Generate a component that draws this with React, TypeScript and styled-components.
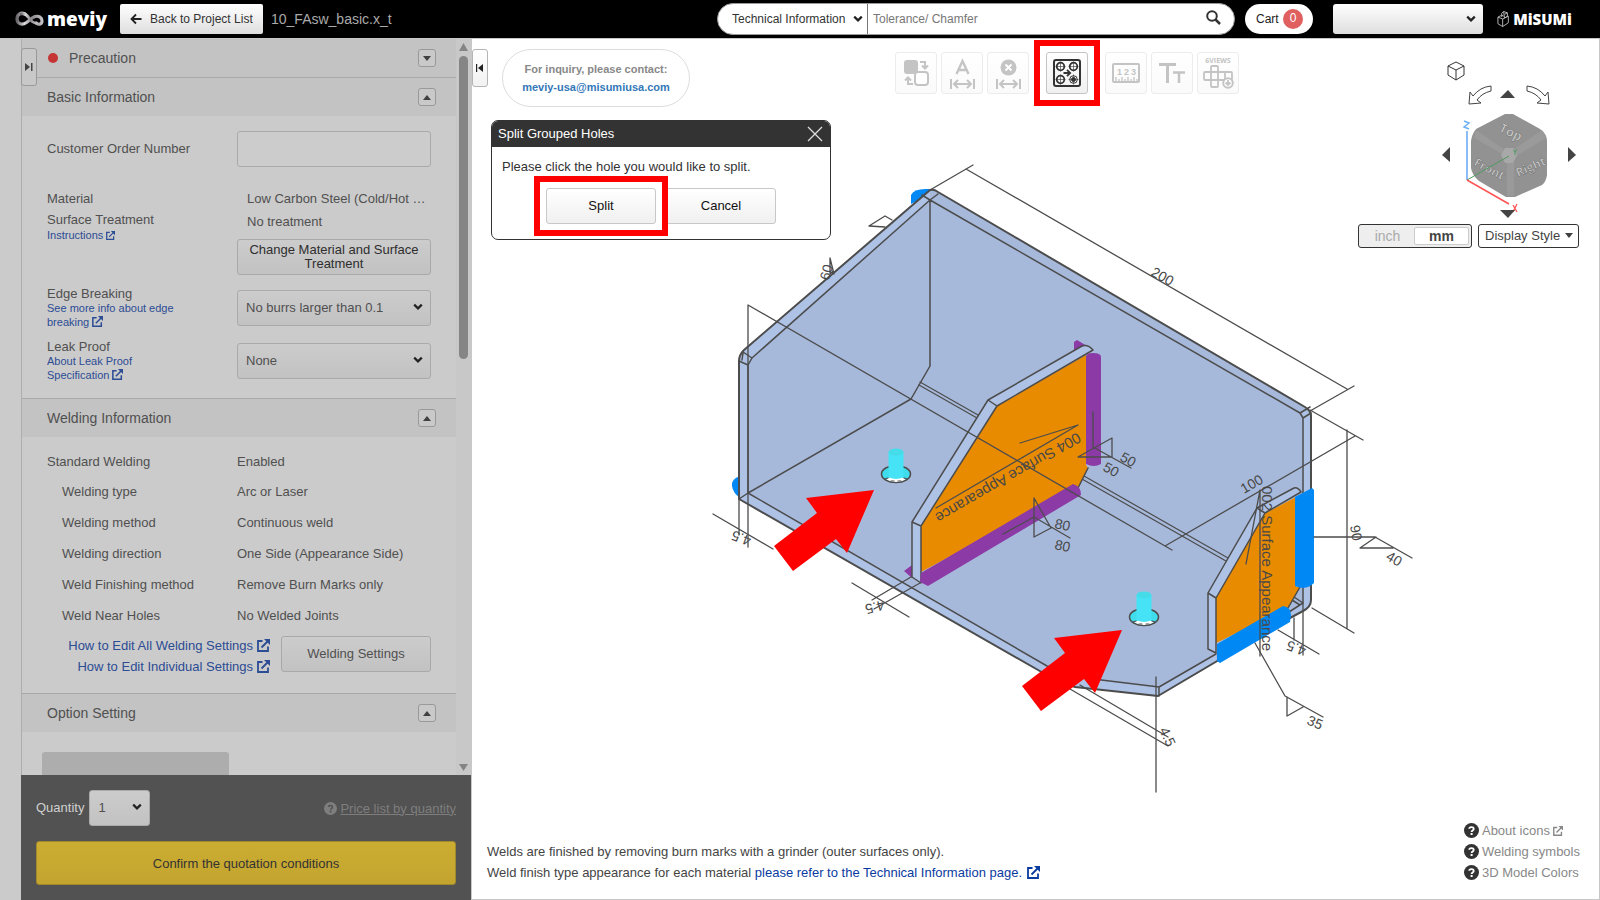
import React from "react";
import styled, { createGlobalStyle } from "styled-components";

const Global = createGlobalStyle`
  *, *::before, *::after { box-sizing: border-box; }
  html, body { margin: 0; padding: 0; }
  body { background: #fff; font-family: "Liberation Sans", Arial, sans-serif; font-size: 13px; color: #333; }
  button, input, select { font: inherit; color: inherit; margin: 0; }
  a { color: inherit; text-decoration: none; }
  h1, h2, p { margin: 0; font-size: inherit; font-weight: normal; }
`;

/* ---------- page frame ---------- */

const Page = styled.div`
  display: flex;
  flex-direction: column;
  min-height: 100vh;
`;

const Body = styled.div`
  display: flex;
  flex: 1;
  border-top: 1px solid #c8c8c8;
`;

/* ---------- header ---------- */

const Header = styled.header`
  display: flex;
  align-items: center;
  height: 38px;
  padding: 0 28px 0 15px;
  background: #000;
  color: #fff;
`;

const Logo = styled.a`
  display: flex;
  align-items: center;
  gap: 3px;
  width: 105px;
  font-family: "Open Sans", sans-serif;
  font-weight: 800;
  font-size: 19px;
  line-height: 24px;
`;

const BackButton = styled.button`
  display: flex;
  align-items: center;
  gap: 8px;
  height: 30px;
  width: 143px;
  padding: 0 10px;
  border: 0;
  border-radius: 2px;
  background: linear-gradient(#fff, #dedede);
  color: #333;
  font-size: 12px;
  white-space: nowrap;
`;

const FileName = styled.h1`
  margin-left: 8px;
  font-size: 14px;
  color: #aaa;
  flex: 1;
`;

const Search = styled.form`
  display: flex;
  align-items: center;
  height: 32px;
  width: 518px;
  border: 1px solid #999;
  border-radius: 16px;
  background: #fff;
  overflow: hidden;
  color: #333;
  font-size: 12px;
`;

const SearchInput = styled.input`
  flex: 1;
  min-width: 0;
  height: 100%;
  padding: 0 5px;
  border: 0;
  border-left: 1px solid #777;
  background: transparent;
  outline: 0;
  &::placeholder { color: #777; opacity: 1; }
`;

const SearchButton = styled.button`
  display: flex;
  padding: 0 13px 4px 0;
  border: 0;
  background: none;
`;

const Cart = styled.a`
  display: flex;
  align-items: center;
  justify-content: space-between;
  width: 68px;
  height: 30px;
  margin-left: 10px;
  padding: 0 10px 0 11px;
  border-radius: 15px;
  background: #fff;
  color: #222;
  font-size: 12px;
`;

const CartCount = styled.span`
  width: 20px;
  height: 20px;
  border-radius: 10px;
  background: #e06060;
  color: #fff;
  line-height: 19px;
  text-align: center;
`;

const Misumi = styled.a`
  display: flex;
  align-items: center;
  gap: 3px;
  margin-left: 14px;
  width: 75px;
  font-family: "Open Sans", sans-serif;
  font-weight: 800;
  font-size: 15px;
`;

/* ---------- shared controls ---------- */

const SelectBox = styled.span<{ $w?: string; $h?: number; $tone: "dim" | "light" | "plain"; $ml?: number }>`
  position: relative;
  display: block;
  width: ${p => p.$w ?? "100%"};
  height: ${p => p.$h ?? 36}px;
  margin-left: ${p => p.$ml ?? 0}px;
  border: ${p => (p.$tone === "dim" ? "1px solid #aaa" : "0")};
  border-radius: ${p => (p.$tone === "plain" ? 0 : 3)}px;
  background: ${p => (p.$tone === "dim" ? "linear-gradient(#ccc, #c2c2c2)" : p.$tone === "light" ? "linear-gradient(#fff, #dedede)" : "transparent")};
  select {
    appearance: none;
    width: 100%;
    height: 100%;
    padding: 0 ${p => (p.$tone === "plain" ? 16 : 24)}px ${p => (p.$tone === "dim" ? 2 : 0)}px ${p => (p.$tone === "plain" ? 14 : 8)}px;
    border: 0;
    background: none;
    outline: 0;
  }
  svg {
    position: absolute;
    right: ${p => (p.$tone === "plain" ? 4 : 7)}px;
    top: 50%;
    margin-top: ${p => (p.$tone === "dim" ? -5 : -4)}px;
    pointer-events: none;
  }
`;

const Tab = styled.button<{ $dim?: boolean }>`
  display: flex;
  align-items: center;
  justify-content: center;
  width: 16px;
  height: 38px;
  padding: 0;
  border: 1px solid ${p => (p.$dim ? "#999" : "#b5b5b5")};
  border-radius: 3px;
  background: ${p => (p.$dim ? "#c8c8c8" : "linear-gradient(#fff, #f2f2f2)")};
`;

/* ---------- sidebar ---------- */

const Rail = styled.div`
  width: 21px;
  background: #cbcbcb;
`;

const Sidebar = styled.aside`
  position: relative;
  display: flex;
  flex-direction: column;
  width: 450px;
  background: #cbcbcb;
  color: #505050;
`;

const SideTab = styled.div`
  position: absolute;
  left: 0;
  top: 9px;
`;

const ScrollArea = styled.div`
  display: flex;
  flex: 1 1 0;
  min-height: 0;
  overflow: hidden;
  border-left: 1px solid #adadad;
`;

const Sections = styled.div`
  flex: 1;
  min-width: 0;
`;

const ScrollTrack = styled.div`
  display: flex;
  flex-direction: column;
  align-items: center;
  width: 15px;
  padding: 4px 3px;
  background: #c8c8c8;
`;

const Thumb = styled.div`
  width: 9px;
  height: 303px;
  margin: 5px 0 auto;
  border-radius: 5px;
  background: #858585;
`;

const SectionHead = styled.div<{ $first?: boolean }>`
  display: flex;
  align-items: center;
  height: ${p => (p.$first ? 38 : 39)}px;
  padding: 0 20px 0 25px;
  border-top: ${p => (p.$first ? "0" : "1px solid #a9a9a9")};
  background: #c3c3c3;
  font-size: 14px;
  h2 { flex: 1; }
`;

const Dot = styled.i`
  width: 10px;
  height: 10px;
  margin: 0 11px 0 1px;
  border-radius: 5px;
  background: #c53535;
`;

const Toggle = styled.button`
  display: flex;
  align-items: center;
  justify-content: center;
  width: 18px;
  height: 18px;
  padding: 0;
  border: 1px solid #999;
  border-radius: 3px;
  background: #c9c9c9;
`;

const BasicBody = styled.div`
  padding: 15px 25px 16px;
`;

const Field = styled.div<{ $mt?: number; $center?: boolean }>`
  display: grid;
  grid-template-columns: 190px 1fr;
  align-items: ${p => (p.$center ? "center" : "start")};
  margin-top: ${p => p.$mt ?? 0}px;
  > label { padding-bottom: 2px; }
`;

const TextBox = styled.input`
  width: 100%;
  height: 36px;
  border: 1px solid #aaa;
  border-radius: 3px;
  background: #ccc;
`;

const Line = styled.div<{ $gap?: number; $indent?: number }>`
  line-height: 20px;
  margin-top: ${p => p.$gap ?? 0}px;
  padding-left: ${p => p.$indent ?? 0}px;
`;

const FieldLabel = styled.label`
  display: block;
  padding-top: 1px;
  line-height: 18px;
`;

const SmallLink = styled.a`
  display: block;
  width: 140px;
  margin-top: -2px;
  color: #2c4c94;
  font-size: 11px;
  line-height: 14px;
  svg { vertical-align: -1px; }
`;

const Control = styled.div`
  padding-top: 6px;
`;

const DimButton = styled.button<{ $strong?: boolean; $mt?: number; $w?: string }>`
  width: ${p => p.$w ?? "100%"};
  height: 36px;
  margin-top: ${p => p.$mt ?? 0}px;
  padding: 0 8px;
  border: 1px solid #a9a9a9;
  border-radius: 3px;
  background: linear-gradient(#ccc, #c2c2c2);
  color: ${p => (p.$strong ? "#2e2e2e" : "#505050")};
  line-height: 14px;
`;

const WeldBody = styled.div`
  padding: 9px 25px 21px;
`;

const WeldTable = styled.table`
  width: 100%;
  border-collapse: collapse;
  th, td { height: 31px; padding: 0; text-align: left; font-weight: normal; }
  tr:first-child > * { height: 30px; }
  th { width: 190px; }
`;

const Sub = styled.span`
  padding-left: 15px;
`;

const WeldActions = styled.div`
  display: flex;
  align-items: center;
  justify-content: flex-end;
  gap: 11px;
  margin-top: 5px;
`;

const LinkStack = styled.div`
  display: flex;
  flex-direction: column;
  align-items: flex-end;
  padding-top: 4px;
  margin: -5px 0;
`;

const WeldLink = styled.a`
  display: flex;
  align-items: center;
  gap: 4px;
  color: #2c4c94;
  line-height: 21px;
`;

const OptionBody = styled.div`
  padding: 20px;
`;

const OptionBlock = styled.div`
  width: 187px;
  height: 60px;
  border-radius: 3px;
  background: #adadad;
`;

const OrderBar = styled.footer`
  padding: 15px;
  height: 125px;
  background: #525252;
`;

const OrderRow = styled.div`
  display: flex;
  align-items: center;
  height: 36px;
  label { padding-bottom: 2px; color: #d0d0d0; }
`;

const PriceLink = styled.a`
  display: flex;
  align-items: center;
  gap: 3px;
  margin-left: auto;
  color: #7e7e7e;
  span { text-decoration: underline; }
`;

const Confirm = styled.button`
  width: 100%;
  height: 44px;
  margin-top: 15px;
  border: 1px solid #a08a2c;
  border-radius: 3px;
  background: linear-gradient(#ccad32, #c3a42f);
  color: #333;
`;

/* ---------- viewer ---------- */

const Viewer = styled.main`
  position: relative;
  display: flex;
  flex: 1;
  flex-direction: column;
  min-width: 0;
  border: 1px solid #c8c8c8;
  border-top: 0;
`;

const Scene = styled.svg`
  position: absolute;
  inset: 0;
  width: 100%;
  height: 100%;
`;

const TopRow = styled.div`
  position: relative;
  display: flex;
  align-items: flex-start;
  padding: 10px 155px 0 0;
  height: 81px;
`;

const Inquiry = styled.address`
  display: flex;
  flex-direction: column;
  align-items: center;
  justify-content: center;
  width: 188px;
  height: 58px;
  margin-left: 14px;
  border: 1px solid #ddd;
  border-radius: 29px;
  background: #fff;
  color: #888;
  font-style: normal;
  font-weight: bold;
  font-size: 11px;
  line-height: 18px;
  a { color: #3478b8; }
`;

const Toolbar = styled.div`
  display: flex;
  align-items: center;
  gap: 4px;
  margin: 3px 205px 0 auto;
`;

const Tool = styled.button<{ $active?: boolean }>`
  display: flex;
  align-items: center;
  justify-content: center;
  width: 42px;
  height: 42px;
  padding: 0;
  border: 1px solid ${p => (p.$active ? "#c4c4c4" : "#ececec")};
  border-radius: 3px;
  background: ${p => (p.$active ? "linear-gradient(#fff, #f0f0f0)" : "linear-gradient(#fff, #fafafa)")};
  color: ${p => (p.$active ? "#333" : "#c4c4c4")};
`;

const Highlight = styled.span<{ $mx?: number }>`
  position: relative;
  display: flex;
  margin: 0 ${p => p.$mx ?? 0}px;
  z-index: 1;
  &::after {
    content: "";
    position: absolute;
    inset: -12px;
    border: 6px solid #f00;
    pointer-events: none;
  }
`;

const NavSlot = styled.div`
  position: absolute;
  right: 22px;
  top: 20px;
  display: flex;
`;

const CubeNav = styled.svg`
  width: 135px;
  height: 165px;
`;

const MidRow = styled.div`
  position: relative;
  display: flex;
  justify-content: space-between;
  align-items: flex-start;
  padding: 0 20px 0 19px;
`;

const Dialog = styled.section`
  width: 340px;
  border: 1px solid #333;
  border-radius: 7px;
  background: #fff;
  overflow: hidden;
`;

const DialogHead = styled.div`
  display: flex;
  align-items: center;
  justify-content: space-between;
  height: 26px;
  padding: 0 7px 1px 6px;
  background: #333;
  color: #fff;
  button { display: flex; padding: 0; border: 0; background: none; }
`;

const DialogBody = styled.div`
  padding: 11px 10px 15px;
  line-height: 18px;
  > div { display: flex; justify-content: center; gap: 10px; margin-top: 12px; }
`;

const PlainButton = styled.button`
  width: 110px;
  height: 36px;
  border: 1px solid #c8c8c8;
  border-radius: 3px;
  background: linear-gradient(#fff, #f0f0f0);
  color: #111;
`;

const ViewOptions = styled.div`
  display: flex;
  gap: 6px;
  margin-top: 104px;
`;

const UnitSwitch = styled.div`
  display: flex;
  width: 114px;
  height: 24px;
  padding: 2px;
  border: 1px solid #333;
  border-radius: 3px;
  background: #eee;
`;

const Unit = styled.button<{ $on?: boolean }>`
  flex: 1;
  padding: 0;
  border: ${p => (p.$on ? "1px solid #ccc" : "0")};
  border-radius: 2px;
  background: ${p => (p.$on ? "#fff" : "none")};
  color: ${p => (p.$on ? "#444" : "#aaa")};
  font-weight: ${p => (p.$on ? "bold" : "normal")};
  font-size: 14px;
  line-height: 16px;
`;

const DisplayStyle = styled.button`
  display: flex;
  align-items: center;
  justify-content: space-between;
  width: 101px;
  height: 24px;
  padding: 0 5px 1px 6px;
  border: 1px solid #333;
  border-radius: 3px;
  background: #fff;
  color: #444;
`;

const BottomRow = styled.div`
  position: relative;
  display: flex;
  align-items: flex-end;
  justify-content: space-between;
  margin-top: auto;
  padding: 0 19px 16px 15px;
`;

const Notes = styled.div`
  line-height: 21px;
  color: #444;
  a { color: #0a3ba0; }
  svg { vertical-align: -2px; margin-left: 1px; }
`;

const HelpList = styled.nav`
  display: flex;
  flex-direction: column;
  line-height: 21px;
  color: #888;
  a { display: flex; align-items: center; gap: 3px; }
`;

/* ---------- icons ---------- */

const Chevron = () => (
  <svg width="10" height="8" viewBox="0 0 10 8" fill="none" stroke="#222" strokeWidth="2.2">
    <path d="M1.2 1.6 5 5.400 8.800 1.600" />
  </svg>
);

const External = ({ size = 13 }: { size?: number }) => (
  <svg width={size} height={size} viewBox="0 0 13 13" fill="none" stroke="currentColor" strokeWidth="1.8">
    <path d="M5.5 2H1v10h10V7.5M4.5 8.5 11 2" />
    <path d="M7 0h6v6z" fill="currentColor" stroke="none" />
  </svg>
);

const Triangle = ({ up, color = "#404040", w = 8, h = 5 }: { up?: boolean; color?: string; w?: number; h?: number }) => (
  <svg width={w} height={h} viewBox="0 0 10 6" preserveAspectRatio="none" fill={color}>
    <path d={up ? "M5 0 10 6H0z" : "M0 0h10L5 6z"} />
  </svg>
);

const Help = ({ size = 15, bg, fg }: { size?: number; bg: string; fg: string }) => (
  <svg width={size} height={size} viewBox="0 0 15 15">
    <circle cx="7.5" cy="7.5" r="7.5" fill={bg} />
    <path d="M5.2 5.8C5.3 3.4 9.8 3.5 9.7 6c0 1.6-2.1 1.500-2.1 3" fill="none" stroke={fg} strokeWidth="1.8" />
    <rect x="6.6" y="10" width="2" height="2" fill={fg} />
  </svg>
);

const MeviyMark = () => (
  <svg width="29" height="16" viewBox="0 0 29 16" fill="none" strokeLinecap="round">
    <defs>
      <linearGradient id="mark" x1="0" x2="1">
        <stop offset="0" stopColor="#6a686a" />
        <stop offset=".3" stopColor="#dedbde" />
        <stop offset=".6" stopColor="#8a888a" />
        <stop offset="1" stopColor="#c4c1c4" />
      </linearGradient>
    </defs>
    <path d="M10 3C6 1 2 3 2 8c0 5 5 6.500 9.500 3.500C15 9 17 6.500 20 5.500c4-1 7 1 7 4.500 0 3-3 4-5.500 2.500" stroke="url(#mark)" strokeWidth="3.2" />
    <path d="M6 3c6-2 8 5 11 7.500 1.500 1.200 3 1.500 4.500 1.500" stroke="url(#mark)" strokeWidth="2.8" />
  </svg>
);

const MisumiMark = () => (
  <svg width="14" height="18" viewBox="0 0 14 18" fill="none" stroke="#bbb" strokeWidth="1">
    <path d="M1 7 6 9v8L1 14zM6 9l6-3v7l-6 4M1 7l4-2 2 1M7 1l4 1.500V6L8 8 7 1 5 3v4M11 2.500 8 4" />
  </svg>
);

const Measure = () => <path d="M1 22v10M24 22v10M4 27h17M8 23l-4 4 4 4M17 23l4 4-4 4" fill="none" stroke="currentColor" strokeWidth="2" />;

const HOLE_SPOTS = [[7.5, 7.5], [20.5, 7.5], [7.5, 20.5], [20.5, 20.5]];

const ToolIcon = ({ name }: { name: string }) => {
  switch (name) {
    case "swap":
      return (
        <svg width="25" height="26" viewBox="0 0 25 26" fill="none" stroke="currentColor" strokeWidth="2">
          <rect x="0" y="0" width="14" height="14" rx="3" fill="currentColor" stroke="none" />
          <rect x="11" y="12" width="13" height="13" rx="3" fill="#fff" />
          <path d="M16 2h5v6M18 5.500l3 3 3-3M9 24H4v-6M1 20.500l3-3 3 3" />
        </svg>
      );
    case "dimension":
      return (
        <svg width="25" height="33" viewBox="0 0 25 33" fill="none" stroke="currentColor" strokeWidth="2.400">
          <path d="M6.500 17 12.500 4l6 13M8.500 13h8" />
          <Measure />
        </svg>
      );
    case "remove":
      return (
        <svg width="25" height="33" viewBox="0 0 25 33">
          <circle cx="12.500" cy="10.500" r="8" fill="currentColor" />
          <path d="m9.500 7.500 6 6m0-6-6 6" stroke="#fff" strokeWidth="2" />
          <Measure />
        </svg>
      );
    case "holes":
      return (
        <svg width="28" height="28" viewBox="0 0 28 28" fill="none" stroke="currentColor">
          <rect x="1" y="1" width="26" height="26" rx="2" strokeWidth="2" />
          {HOLE_SPOTS.map(([x, y], i) => (
            <g key={i}>
              <circle cx={x} cy={y} r={3.800} strokeWidth={i === 3 ? 1 : 1.800} />
              <path d={`M${x - 5} ${y}h10M${x} ${y - 5}v10`} strokeWidth=".6" />
              {i === 3 && <circle cx={x} cy={y} r={2} fill="currentColor" />}
            </g>
          ))}
          <path d="M10.500 14h6M14 10.800l3.200 3.200-3.200 3.200" strokeWidth="1.800" />
        </svg>
      );
    case "ruler":
      return (
        <svg width="28" height="20" viewBox="0 0 28 20" fill="none" stroke="currentColor" strokeWidth="2">
          <rect x="1" y="1" width="26" height="18" rx="1" />
          <path d="M4 19v-5M7 19v-3M10 19v-5M13 19v-3M16 19v-5M19 19v-3M22 19v-5M25 19v-3" strokeWidth="1.300" />
          <g fontSize="9" fontWeight="bold" fill="currentColor" stroke="none">
            <text x="5" y="12">1</text>
            <text x="12" y="12">2</text>
            <text x="19" y="12">3</text>
          </g>
        </svg>
      );
    case "text":
      return (
        <svg width="26" height="22" viewBox="0 0 26 22" fill="none" stroke="currentColor" strokeWidth="3">
          <path d="M0 2.500h17M8.500 2.500V21" />
          <path d="M14 10.500h12M20 10.500V21" strokeWidth="2.500" />
        </svg>
      );
    default:
      return (
        <svg width="32" height="34" viewBox="0 0 32 34" fill="none" stroke="currentColor" strokeWidth="1.800">
          <text x="16" y="7" textAnchor="middle" fontSize="7" fontWeight="bold" fill="currentColor" stroke="none" fontFamily="Open Sans">6VIEWS</text>
          <rect x="2" y="16" width="28" height="8" rx="1" />
          <rect x="9" y="10" width="7" height="21" rx="1" />
          <path d="M23 16v8" />
          <circle cx="26" cy="27" r="4.800" fill="#fff" strokeWidth="2" />
          <path d="M26 24v5m-2.500-2.500 2.500 2.500 2.500-2.500" />
        </svg>
      );
  }
};

/* ---------- 3D view ---------- */

const EDGE = "#4c4c4c";
const FACE = "#a7b9db";
const RIM = "#aec2e6";
const ORANGE = "#e98b00";
const PURPLE = "#8c3aa6";
const BLUE = "#0088f5";

const Hole = ({ x, y }: { x: number; y: number }) => (
  <g transform={`translate(${x} ${y})`}>
    <ellipse rx="14.500" ry="8.500" fill="#3fdcec" stroke={EDGE} strokeWidth="1.500" />
    <path d="M-10 5Q0 0 10 5 6 8 0 8T-10 5z" fill="#fff" />
    <path d="M-8 4-11 5M8 4l3 1M-5 7h3M2 7h3" stroke={EDGE} strokeWidth="1.200" />
    <path d="M-7.500-22V3Q0 7 7.500 3v-25z" fill="#45e3f5" />
    <ellipse cy="-22" rx="7.500" ry="3.500" fill="#45dbe9" />
  </g>
);

const ARROW = "M0 0-68 8-57 23-100 56-81 81-38 49-27 63z";

const LABELS = [
  { t: "200", x: 1150, y: 275, r: 29 },
  { t: "100", x: 1244, y: 494, r: -30 },
  { t: "90", x: 1350, y: 526, r: 80 },
  { t: "40", x: 1385, y: 559, r: 30 },
  { t: "35", x: 1306, y: 724, r: 22 },
  { t: "50", x: 1119, y: 460, r: 29 },
  { t: "50", x: 1102, y: 470, r: 29 },
  { t: "80", x: 1054, y: 528, r: 12 },
  { t: "80", x: 1054, y: 549, r: 12 },
  { t: "60", x: 829, y: 281, r: -75 },
  { t: "4.5", x: 752, y: 537, r: 200 },
  { t: "4.5", x: 883, y: 600, r: 165 },
  { t: "4.5", x: 1307, y: 647, r: 200 },
  { t: "4.5", x: 1159, y: 730, r: 65 },
];

const Model = () => (
  <Scene viewBox="472 39 1127 860" preserveAspectRatio="xMidYMid meet" fill="none" strokeLinecap="round" strokeLinejoin="round">
    <g fill={BLUE}>
      <path d="M911 204v-9q3-7 18-6l2 5z" />
      <path d="M740 476q-9 3-8 10 1 7 8 12z" />
    </g>
    <path d="M930 190 744 350q-5 5-5 11v138l306 175 30 13 83 9 132-78 13-7q8-4 8-11V415q0-4-6-8L938 192q-4-3-8-2z" fill={FACE} />
    <g fill={RIM}>
      <path d="M930 190 744 350q-5 5-5 11v138l9-6V365l4-7 178-158z" />
      <path d="M748 493 739 499l306 175 30 13 83 9 58-34v-8l-57 33-57-6-55-15z" />
      <path d="M1303 418v185l-14 9 1 6 13-7q8-4 8-11V415l-8-6z" />
    </g>
    <g stroke={EDGE} strokeWidth="1.500">
      <path d="M930 190 744 350q-5 5-5 11v138l306 175 30 13 83 9 132-78 13-7q8-4 8-11V415q0-4-6-8L938 192q-4-3-8-2" strokeWidth="2" />
      <path d="m922 195 8 5 8-6M930 200 752 358l-4 7v128l299 173 38 12 74 9 57-33M739 361l9 4M743 352l9 6M743 353l-1 7M930 200v166l-19 33-163 94-9 6M930 200l370 213M1300 413l10-6M1303 418l8-5M1300 413l3 5v185l-14 9M1159 687v9M1294 597l9 6M1292 600l8 5" />
      <path d="m920 382 58 33M919 385l58 33M1084 476l144 82M1082 479l144 82" strokeWidth="1.200" />
    </g>
    <Hole x={896} y={474} />
    <Hole x={1144} y={617} />

    <path d="M1074 352v-10l3-2 10 6zM904 571l8-6v13z" fill={PURPLE} />
    <path d="m912 522 76-122 94-54q6-2 11 4l-96 56-76 120v57l-9-6z" fill={RIM} />
    <path d="m997 406 89-51v110l2 3-10 20-157 84v-46z" fill={ORANGE} />
    <path d="m912 522 76-122 94-54q6-2 11 4l-96 56-76 120v57l-9-6zM912 522l9 4M988 400l9 6M1088 468l-10 20" stroke={EDGE} strokeWidth="1.500" />
    <path d="M1086 357q0-4 7-4 8 0 8 4v107q-7 4-15 0zM921 573l152-89q8 2 8 11l-153 91-8-4z" fill={PURPLE} />

    <path d="m1208 593 49-85 37-20 7 4-36 21-48 84v56l-9-4z" fill={RIM} />
    <path d="m1216 598 48-84 32-17v90h4l-12 21-72 35z" fill={ORANGE} />
    <path d="m1208 593 49-85 37-20q4-1 7 4l-36 21-49 85v55l-8-4zM1208 593l8 5M1257 508l8 5M1300 587l-12 21" stroke={EDGE} strokeWidth="1.500" />
    <path d="m1295 497 17-9 2 2v93q-8 8-19 3zM1217 644l66-38q8 1 8 9l-1 7-70 41-3-2z" fill={BLUE} />

    <g stroke={EDGE} strokeWidth="1.300">
      <path d="m930 190 43-25M966 169l381 220M1310 411l44-25M1310 410l53 30M1355 436l-190 110M748 547V305l424 245" />
      <path d="M739 499v36M713 514l60 35" />
      <path d="m852 583 57 34M911 577l-39 23M920 583l-46 26" />
      <path d="M1347 430v198M1312 608l42 25M1314 537h61l37 21M1376 537l-16 11h33" />
      <path d="m1255 643 30 53 38 21M1287 697v19l16-9" />
      <path d="M1294 618v22M1303 603v52M1278 630l41 24" />
      <path d="m1070 689 98 57M1080 685l88 52M1156 677v115" />
      <path d="M1260 490v166M1260 490l-14 74" />
      <path d="M1093 412v35l38 21M1094 448l18-10v19h-34z" />
      <path d="m1003 534 31-17 36 21M1034 498v39l17-9z" />
      <path d="m936 508 142-83-58 18" />
      <path d="m869 226 16-10 7 4M869 226l16 1M833 271l-3 3v-16l4 16" />
    </g>
    <g fill="#484848" fontSize="14" fontFamily="Liberation Sans, sans-serif">
      {LABELS.map((l, i) => (
        <text key={i} transform={`translate(${l.x} ${l.y}) rotate(${l.r})`}>{l.t}</text>
      ))}
      <text transform="translate(1077 432) rotate(150)" fontSize="15">004 Surface Appearance</text>
      <text transform="translate(1262 486) rotate(90)" fontSize="15">002 Surface Appearance</text>
    </g>
    <g fill="#f00">
      <path d={ARROW} transform="translate(874 490)" />
      <path d={ARROW} transform="translate(1122 630)" />
    </g>
  </Scene>
);

const Navigator = () => (
  <CubeNav viewBox="1442 59 135 165" fill="none">
    <path d="m1456 62 8 4v9l-8 5-8-5v-9zM1448 66l8 4 8-4M1456 70v10" stroke="#333" />
    <path d="M1491 86v5q-9 2-14 9l4 3-12 1 1-12 3 4q7-9 18-10zM1527 86v5q9 2 14 9l-4 3 12 1-1-12-3 4q-7-9-18-10z" stroke="#444" fill="#fff" />
    <path d="M1505 114h8l27 15q7 5 7 12v34q-1 7-5 10l-27 12h-9l-27-16q-7-6-8-13v-27q1-7 5-12z" fill="#929292" />
    <path d="m1476 130 29 20h8l29-20 4 8-30 18-2 6v34h-7v-35l-3-6-30-17z" fill="#9a9a9a" />
    <path d="m1505 148h8l4 7-4 8h-8l-4-8z" fill="#a8a8a8" />
    <g fontSize="13" fill="#d0d0d0" stroke="#777" strokeWidth=".6" fontWeight="bold" fontFamily="Open Sans, sans-serif">
      <text transform="translate(1498 131) rotate(26)">Top</text>
      <text transform="translate(1473 165) rotate(28)" fontSize="12">Front</text>
      <text transform="translate(1518 177) rotate(-24)" fontSize="12">Right</text>
    </g>
    <path d="M1467 180v-49" stroke="#8cbcf5" strokeWidth="2" />
    <path d="m1467 180 42-24" stroke="#4f9a60" />
    <path d="m1467 180 42 24" stroke="#f55" strokeWidth="1.500" />
    <path d="M1464 121l5 2-5 4 5 2" stroke="#6cb0f5" strokeWidth="1.500" />
    <path d="m1513 205 4 7m0-8-4 8" stroke="#f55" strokeWidth="1.300" />
    <path d="m1513 150 2 2 2-3m-2 3v3" stroke="#4f9a60" />
    <path d="m1508 90 7 8h-15zM1442 155l8-8v15zM1576 155l-8-8v15zM1508 218l7-8h-15z" fill="#444" />
  </CubeNav>
);

/* ---------- page ---------- */

const Head = ({ title, open = true, first, dot }: { title: string; open?: boolean; first?: boolean; dot?: boolean }) => (
  <SectionHead $first={first}>
    {dot && <Dot />}
    <h2>{title}</h2>
    <Toggle aria-label={title}><Triangle up={open} /></Toggle>
  </SectionHead>
);

const WELDING = [
  ["Welding type", "Arc or Laser"],
  ["Welding method", "Continuous weld"],
  ["Welding direction", "One Side (Appearance Side)"],
  ["Weld Finishing method", "Remove Burn Marks only"],
  ["Weld Near Holes", "No Welded Joints"],
];

export default function App() {
  return (
    <Page>
      <Global />
      <Header>
        <Logo href="#"><MeviyMark />meviy</Logo>
        <BackButton>
          <svg width="12" height="12" viewBox="0 0 12 12" fill="none" stroke="#222" strokeWidth="1.800"><path d="M11.500 6H2M6 1.500 1.500 6 6 10.500" /></svg>
          Back to Project List
        </BackButton>
        <FileName>10_FAsw_basic.x_t</FileName>
        <Search>
          <SelectBox $tone="plain" $w="149px" $h={30}>
            <select aria-label="Search in"><option>Technical Information</option></select>
            <Chevron />
          </SelectBox>
          <SearchInput aria-label="Search" placeholder="Tolerance/ Chamfer" />
          <SearchButton type="button" aria-label="Search">
            <svg width="15" height="15" viewBox="0 0 15 15" fill="none" stroke="#333"><circle cx="6" cy="6" r="4.800" strokeWidth="2" /><path d="m9.500 9.500 4.500 4.500" strokeWidth="2.500" /></svg>
          </SearchButton>
        </Search>
        <Cart href="#">Cart<CartCount>0</CartCount></Cart>
        <SelectBox $tone="light" $w="150px" $h={30} $ml={20}>
          <select aria-label="Account"><option></option></select>
          <Chevron />
        </SelectBox>
        <Misumi href="#"><MisumiMark />MiSUMi</Misumi>
      </Header>
      <Body>
        <Rail />
        <Sidebar>
          <ScrollArea>
            <Sections>
              <Head title="Precaution" open={false} first dot />
              <Head title="Basic Information" />
              <BasicBody>
                <Field $center>
                  <label htmlFor="order">Customer Order Number</label>
                  <TextBox id="order" />
                </Field>
                <Field $mt={22}>
                  <div>
                    <Line>Material</Line>
                    <Line $gap={1}>Surface Treatment</Line>
                    <SmallLink href="#">Instructions <External size={9} /></SmallLink>
                  </div>
                  <div>
                    <Line $indent={10}>Low Carbon Steel (Cold/Hot …</Line>
                    <Line $indent={10} $gap={3}>No treatment</Line>
                    <DimButton $strong $mt={7}>Change Material and Surface Treatment</DimButton>
                  </div>
                </Field>
                <Field $mt={9}>
                  <div>
                    <FieldLabel htmlFor="edge">Edge Breaking</FieldLabel>
                    <SmallLink href="#">See more info about edge breaking <External size={11} /></SmallLink>
                  </div>
                  <Control>
                    <SelectBox $tone="dim">
                      <select id="edge"><option>No burrs larger than 0.1</option></select>
                      <Chevron />
                    </SelectBox>
                  </Control>
                </Field>
                <Field $mt={8}>
                  <div>
                    <FieldLabel htmlFor="leak">Leak Proof</FieldLabel>
                    <SmallLink href="#">About Leak Proof<br />Specification <External size={11} /></SmallLink>
                  </div>
                  <Control>
                    <SelectBox $tone="dim">
                      <select id="leak"><option>None</option></select>
                      <Chevron />
                    </SelectBox>
                  </Control>
                </Field>
              </BasicBody>
              <Head title="Welding Information" />
              <WeldBody>
                <WeldTable>
                  <tbody>
                    <tr><th scope="row">Standard Welding</th><td>Enabled</td></tr>
                    {WELDING.map(([k, v]) => (
                      <tr key={k}><th scope="row"><Sub>{k}</Sub></th><td>{v}</td></tr>
                    ))}
                  </tbody>
                </WeldTable>
                <WeldActions>
                  <LinkStack>
                    <WeldLink href="#">How to Edit All Welding Settings<External /></WeldLink>
                    <WeldLink href="#">How to Edit Individual Settings<External /></WeldLink>
                  </LinkStack>
                  <DimButton $w="150px">Welding Settings</DimButton>
                </WeldActions>
              </WeldBody>
              <Head title="Option Setting" />
              <OptionBody><OptionBlock /></OptionBody>
            </Sections>
            <ScrollTrack>
              <Triangle up w={9} h={8} color="#858585" />
              <Thumb />
              <Triangle w={9} h={7} color="#858585" />
            </ScrollTrack>
          </ScrollArea>
          <OrderBar>
            <OrderRow>
              <label htmlFor="qty">Quantity</label>
              <SelectBox $tone="dim" $w="61px" $ml={5}>
                <select id="qty"><option>1</option></select>
                <Chevron />
              </SelectBox>
              <PriceLink href="#"><Help size={13} bg="#7e7e7e" fg="#525252" /><span>Price list by quantity</span></PriceLink>
            </OrderRow>
            <Confirm>Confirm the quotation conditions</Confirm>
          </OrderBar>
          <SideTab>
            <Tab $dim aria-label="Expand panel">
              <svg width="8" height="8" viewBox="0 0 8 8"><path d="M0 0v8l5-4zM6 0h1.500v8H6z" fill="#444" /></svg>
            </Tab>
          </SideTab>
        </Sidebar>
        <Viewer>
          <Model />
          <TopRow>
            <Tab aria-label="Collapse panel">
              <svg width="8" height="8" viewBox="0 0 8 8"><path d="M7 0v8L2 4zM0 0h1.200v8H0z" fill="#222" /></svg>
            </Tab>
            <Inquiry>
              <span>For inquiry, please contact:</span>
              <a href="#">meviy-usa@misumiusa.com</a>
            </Inquiry>
            <Toolbar role="toolbar">
              <Tool aria-label="Swap"><ToolIcon name="swap" /></Tool>
              <Tool aria-label="Add dimension"><ToolIcon name="dimension" /></Tool>
              <Tool aria-label="Remove dimension"><ToolIcon name="remove" /></Tool>
              <Highlight $mx={13}><Tool $active aria-label="Split grouped holes"><ToolIcon name="holes" /></Tool></Highlight>
              <Tool aria-label="Measure"><ToolIcon name="ruler" /></Tool>
              <Tool aria-label="Text"><ToolIcon name="text" /></Tool>
              <Tool aria-label="Six views"><ToolIcon name="views" /></Tool>
            </Toolbar>
            <NavSlot><Navigator /></NavSlot>
          </TopRow>
          <MidRow>
            <Dialog role="dialog" aria-label="Split Grouped Holes">
              <DialogHead>
                <h2>Split Grouped Holes</h2>
                <button aria-label="Close"><svg width="16" height="16" viewBox="0 0 16 16" stroke="#ddd" strokeWidth="1.300"><path d="m1 1 14 14M15 1 1 15" /></svg></button>
              </DialogHead>
              <DialogBody>
                <p>Please click the hole you would like to split.</p>
                <div>
                  <Highlight><PlainButton>Split</PlainButton></Highlight>
                  <PlainButton>Cancel</PlainButton>
                </div>
              </DialogBody>
            </Dialog>
            <ViewOptions>
              <UnitSwitch>
                <Unit>inch</Unit>
                <Unit $on>mm</Unit>
              </UnitSwitch>
              <DisplayStyle>Display Style<Triangle w={8} h={5} /></DisplayStyle>
            </ViewOptions>
          </MidRow>
          <BottomRow>
            <Notes>
              <p>Welds are finished by removing burn marks with a grinder (outer surfaces only).</p>
              <p>Weld finish type appearance for each material <a href="#">please refer to the Technical Information page. <External /></a></p>
            </Notes>
            <HelpList>
              <a href="#"><Help bg="#333" fg="#fff" />About icons <External size={10} /></a>
              <a href="#"><Help bg="#333" fg="#fff" />Welding symbols</a>
              <a href="#"><Help bg="#333" fg="#fff" />3D Model Colors</a>
            </HelpList>
          </BottomRow>
        </Viewer>
      </Body>
    </Page>
  );
}
